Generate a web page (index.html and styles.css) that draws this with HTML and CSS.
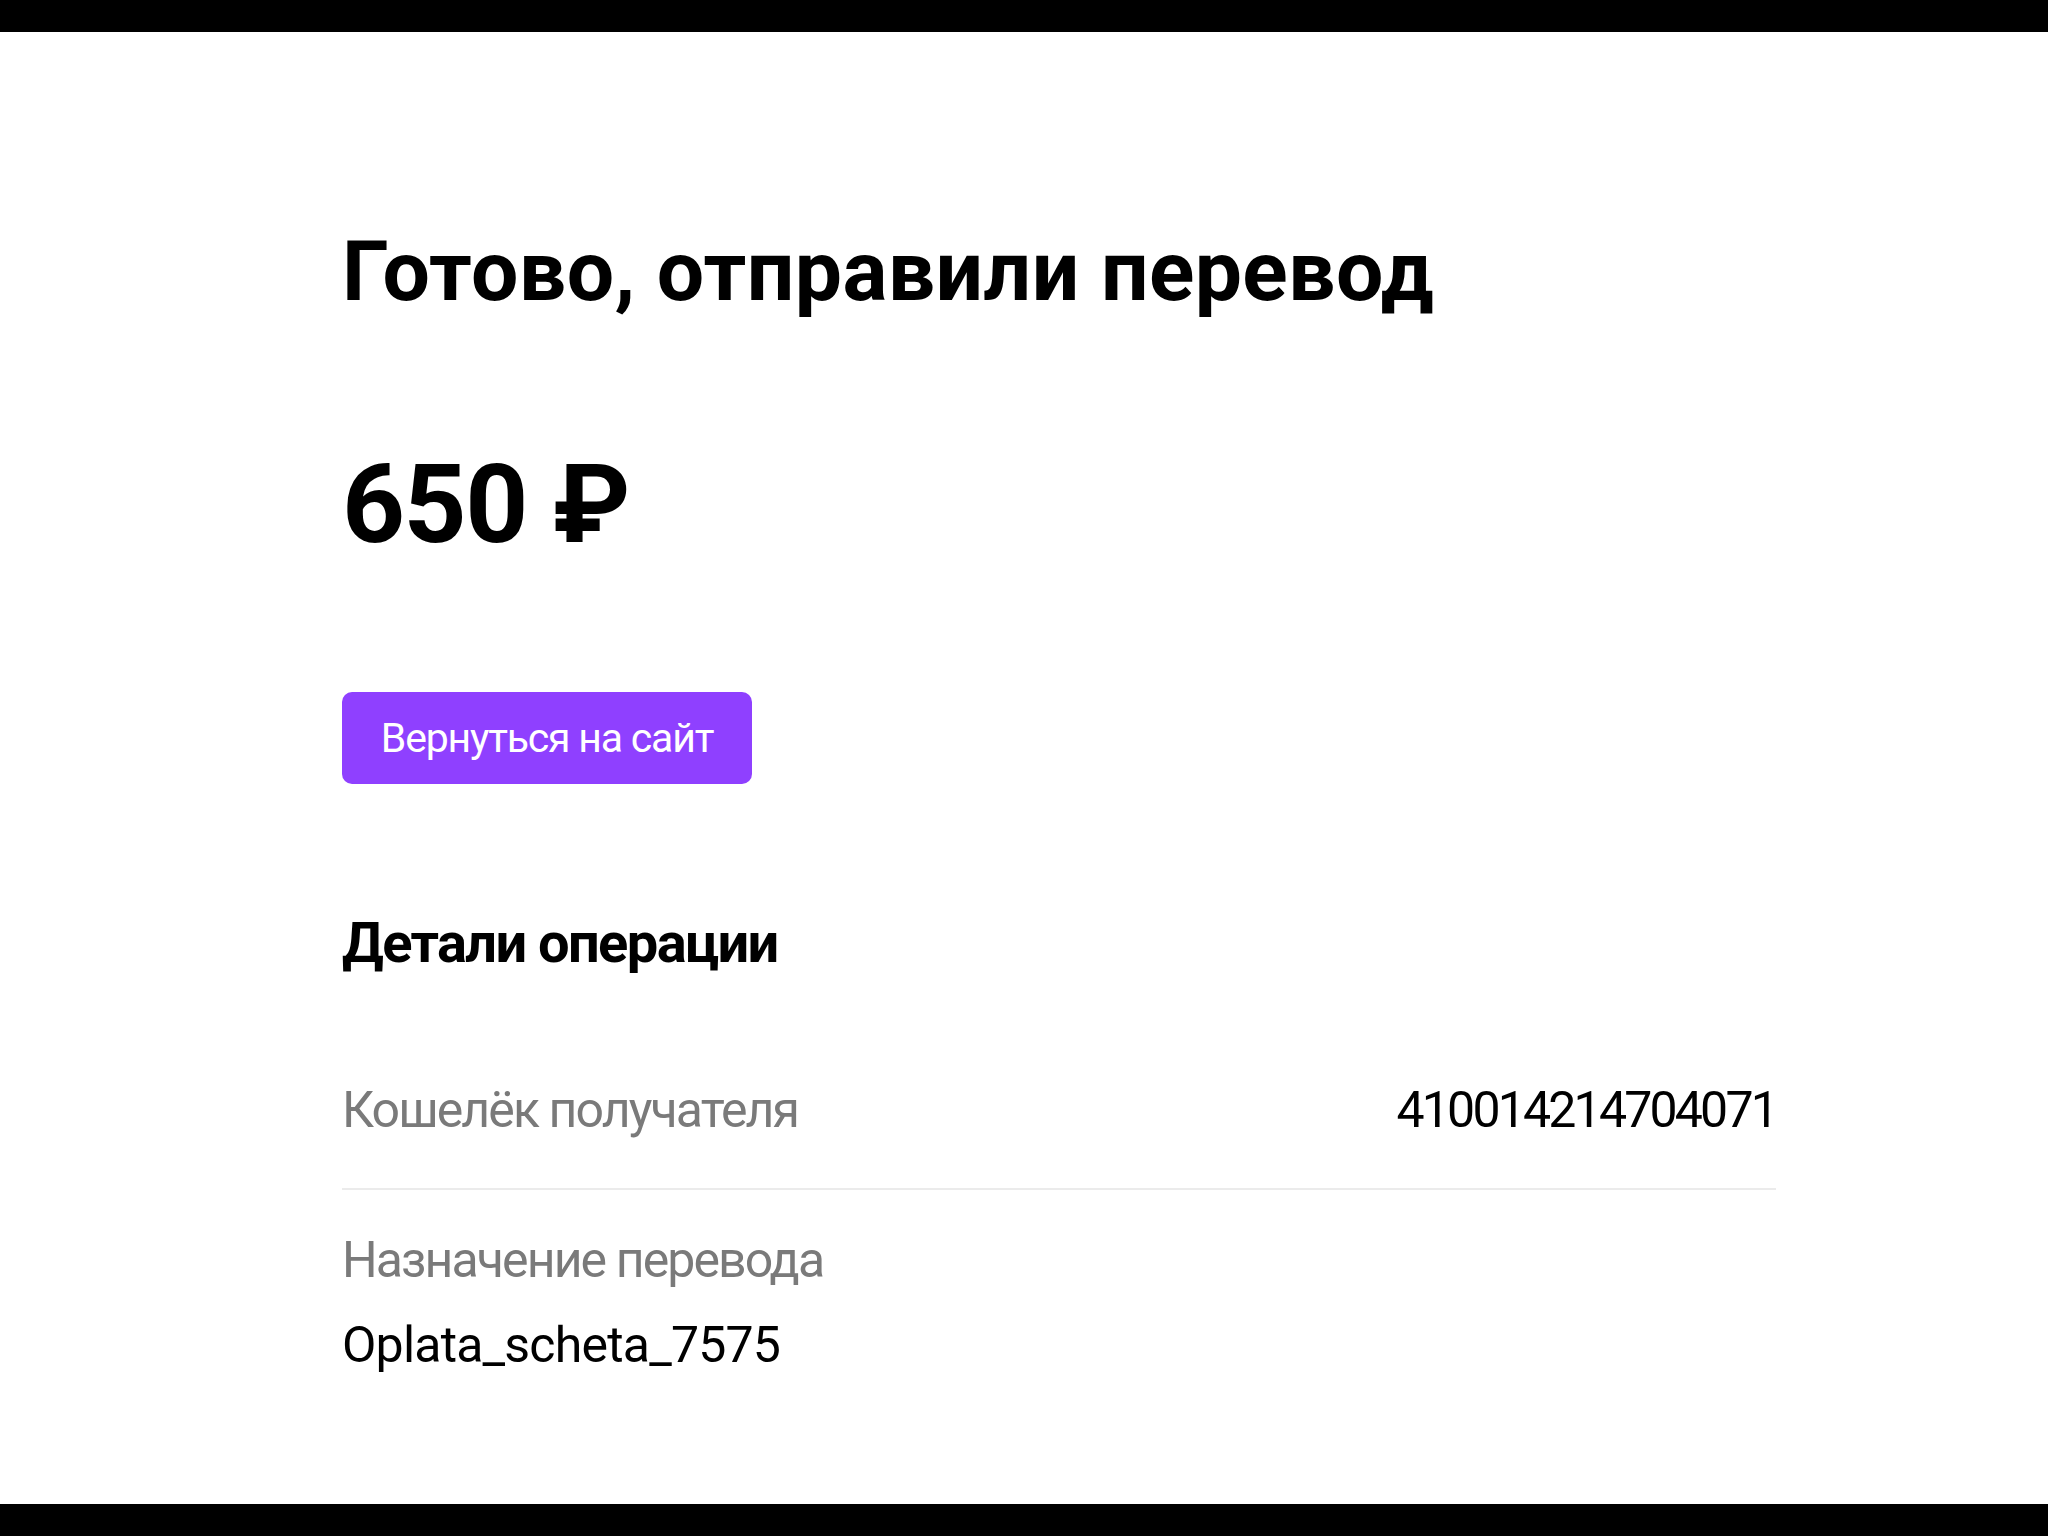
FILE: index.html
```html
<!DOCTYPE html>
<html lang="ru">
<head>
    <meta charset="utf-8">
    <title>Перевод отправлен</title>
    <link rel="stylesheet" href="styles.css">
</head>
<body>
    <div class="screen">
        <div class="bar"></div>
        <main class="page">
            <h1 class="title">Готово, отправили перевод</h1>
            <div class="amount">650 ₽</div>
            <button type="button" class="back-btn">Вернуться на сайт</button>

            <h2 class="details-title">Детали операции</h2>
            <div class="details">
                <div class="row row-inline">
                    <span class="label">Кошелёк получателя</span>
                    <span class="value value-num">410014214704071</span>
                </div>
                <div class="row row-stack">
                    <span class="label">Назначение перевода</span>
                    <span class="value">Oplata_scheta_7575</span>
                </div>
            </div>
        </main>
        <div class="bar"></div>
    </div>
</body>
</html>
```

FILE: styles.css
```css
/* payment success page */
html, body {
    margin: 0;
    padding: 0;
    background: #fff;
}
body {
    font-family: Roboto, "Noto Sans", sans-serif;
    color: #000;
}
.screen {
    display: flex;
    flex-direction: column;
    height: 100vh;
}
.bar {
    height: 32px;
    background: #000;
    flex-shrink: 0;
}
.page {
    flex: 1;
    width: 1434px;
    padding: 190px 0 0 342px;
    display: flex;
    flex-direction: column;
    align-items: flex-start;
}
.title {
    margin: 0;
    font-size: 84px;
    line-height: 100px;
    font-weight: 700;
    letter-spacing: 0.4px;
}
.amount {
    margin-top: 123px;
    font-size: 110px;
    line-height: 120px;
    font-weight: 700;
    letter-spacing: -1.5px;
}
.back-btn {
    margin-top: 127px;
    width: 410px;
    height: 92px;
    padding: 0;
    border: none;
    border-radius: 10px;
    background-color: #8f40ff;
    color: #fff;
    font-family: inherit;
    font-size: 41px;
    letter-spacing: -1.2px;
    white-space: nowrap;
    cursor: pointer;
}
.details-title {
    margin: 127px 0 0;
    font-size: 56px;
    line-height: 64px;
    font-weight: 700;
    letter-spacing: -1.6px;
}
.details {
    margin-top: 64px;
    width: 100%;
}
.row {
    font-size: 50px;
    line-height: 60px;
}
.row-inline {
    display: flex;
    justify-content: space-between;
    padding: 41px 0 48px;
    border-bottom: 2px solid #ebebeb;
}
.row-stack {
    display: flex;
    flex-direction: column;
    gap: 25px;
    padding-top: 40px;
}
.label {
    color: #7a7a7a;
    letter-spacing: -1.9px;
}
.value {
    color: #000;
    letter-spacing: -0.8px;
}
.value-num {
    letter-spacing: -2.8px;
}
```
